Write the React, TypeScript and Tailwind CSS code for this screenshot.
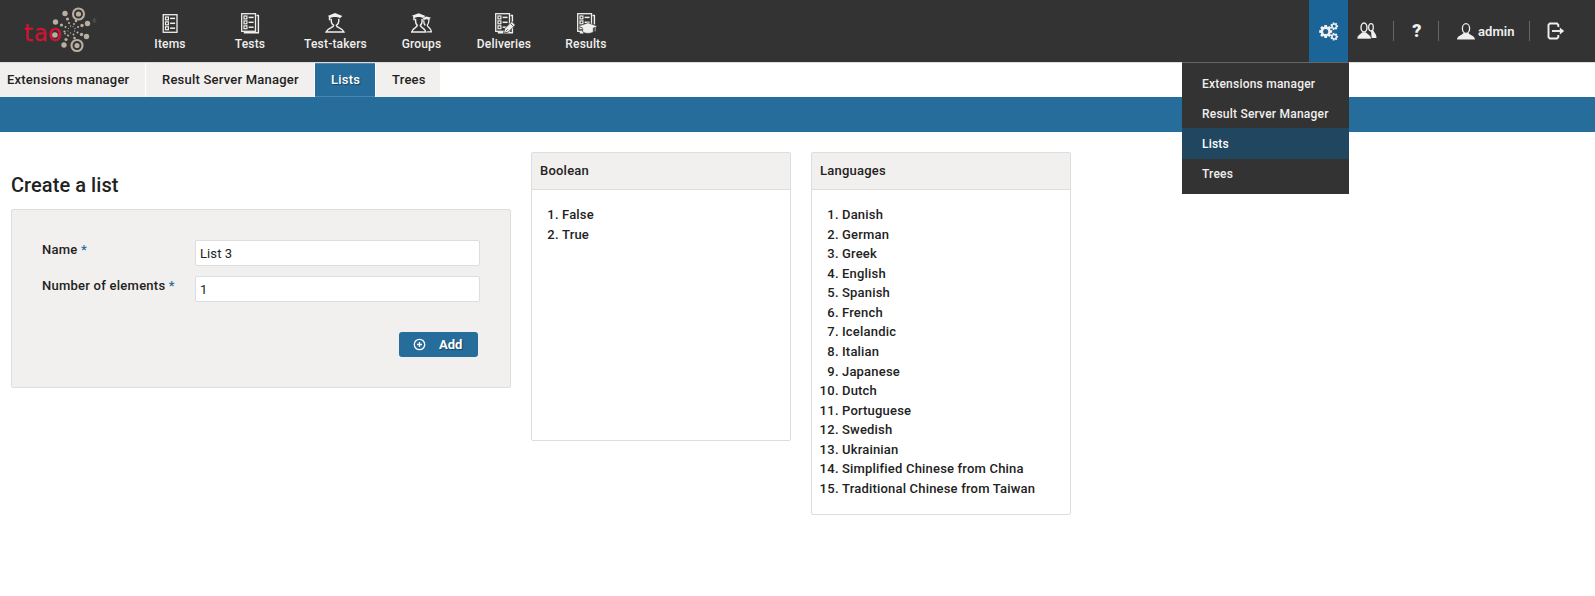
import React from "react";

const ICON = "#f0efee";

function Sheet() {
  return (
    <g fill="none" stroke={ICON} strokeWidth="1.3">
      <rect x="0.7" y="0.7" width="13.8" height="17.6" />
      {[3, 7.9, 12.8].map((y) => (
        <g key={y}>
          <rect x="3" y={y} width="2.9" height="2.9" strokeWidth="1.2" />
          <path d={`M7.600 ${y + 1.4}h5`} strokeWidth="1.500" />
        </g>
      ))}
    </g>
  );
}

function Student() {
  return (
    <g>
      <path d="M10 0 2.600 3l1.200.6v3.600h1.600V5c2-1.400 7.200-1.400 9.200 0v.6L17.400 3z" fill={ICON} />
      <path
        d="M6.300 5.800c-.5 3.600 1 5.600 2.400 6.500 0 2.700-6.200 2.400-7.600 6.600h17.800c-1.400-4.200-7.600-3.900-7.600-6.600 1.400-.9 2.900-2.900 2.400-6.500"
        fill="none"
        stroke={ICON}
        strokeWidth="1.500"
      />
    </g>
  );
}

const navIcons: Record<string, React.ReactNode> = {
  Items: (
    <g transform="translate(2.500 1)">
      <Sheet />
    </g>
  ),
  Tests: (
    <g transform="translate(1 0)">
      <Sheet />
      <path d="M15.500 2.500h1.900v17.200H3.500v-1.500" fill="none" stroke={ICON} strokeWidth="1.400" />
    </g>
  ),
  "Test-takers": <Student />,
  Groups: (
    <g>
      <path
        d="M17.800 6.500c.3 3-.5 4.500-1.500 5.700 0 2 3.700 2.400 4.100 6.700H16M12.700 7.500c0 2.500.5 4 1.600 5"
        fill="none"
        stroke={ICON}
        strokeWidth="1.300"
      />
      <path d="m15.500 3.400-3.500 1.400.5 2.700 1-.8c1.500-.7 3-.7 4.300.2l.7.3.2-1.700 1.500-.7z" fill={ICON} />
      <path d="M7.700.3.800 2.800 2.200 3.600v3.600h1.500V4.900c2-1.200 6-1.200 8 0L14.600 3z" fill={ICON} />
      <path
        d="M4.600 5.800c-.4 3.600.6 5.600 1.700 6.500 0 2.700-5.100 2.400-5.500 6.600h14c-.4-4.200-5.500-3.900-5.500-6.600 1.100-.9 2.200-2.900 1.700-6.500"
        fill="none"
        stroke={ICON}
        strokeWidth="1.500"
      />
    </g>
  ),
  Deliveries: (
    <g transform="translate(1 0)">
      <Sheet />
      <path d="M15.500 2.500h1.900v17.200H3.500v-1.500" fill="none" stroke={ICON} strokeWidth="1.400" />
      <path d="m8.500 20.300 1.300-4.800 7-7 3.600 3.500-7 7z" fill={ICON} stroke="#333" strokeWidth=".8" />
      <path d="m10.800 18.300 2-2M15.500 10.500l3 3" stroke="#333" strokeWidth=".8" />
    </g>
  ),
  Results: (
    <g transform="translate(1 0)">
      <Sheet />
      <path d="M15.500 2.500h1.900v9M3.500 18v1.700h3" fill="none" stroke={ICON} strokeWidth="1.400" />
      <path
        d="m11 9.800 9.500 3.400-1.700.8v4.500h-1.200v-4l-1.300.6V19c-2.300 1.900-8.300 1.900-10.600 0v-3.900L1.500 13.200z"
        fill={ICON}
        stroke="#333"
        strokeWidth=".6"
      />
    </g>
  ),
};

const nav: [string, string][] = [
  ["Items", "w-[80px]"],
  ["Tests", "w-[80px]"],
  ["Test-takers", "w-[91px]"],
  ["Groups", "w-[81px]"],
  ["Deliveries", "w-[84px]"],
  ["Results", "w-[80px]"],
];

function Logo() {
  const c = "#b9aea0";
  const dots: [number, number, number][] = [
    [65, 13.5, 2.7], [55.5, 22, 2.7], [87.5, 23.5, 2.7], [86.5, 36.5, 2.7], [64, 45, 2.7],
    [67.5, 19, 1.6], [61.5, 25, 1.6], [82, 25.5, 1.7], [81.5, 34.5, 1.7], [66, 39.5, 1.6],
    [76, 21, 1.3], [65, 33.5, 0.9], [74.5, 38, 1.3], [69, 23, 1.1], [65.5, 27, 1.1],
    [78, 27, 1.1], [77.5, 32.5, 1.1], [64.5, 31.5, 1.1], [68, 35.5, 1.1], [74, 24, 1], [73.5, 34.5, 1],
    [70.5, 26, 0.7], [68.5, 28.5, 0.6], [75, 28.5, 0.7], [74.5, 31, 0.7], [68, 31, 0.6], [70.5, 33, 0.7], [73, 26.5, 0.6],
  ];
  return (
    <svg width="110" height="62" viewBox="0 0 110 62" className="shrink-0">
      {dots.map(([x, y, r], i) => (
        <circle key={i} cx={x} cy={y} r={r} fill={c} />
      ))}
      <circle cx="78.500" cy="14" r="5.500" fill="none" stroke={c} strokeWidth="2.100" />
      <circle cx="78.500" cy="14" r="2.600" fill={c} />
      <circle cx="77" cy="45.500" r="5.500" fill="none" stroke={c} strokeWidth="2.100" />
      <circle cx="77" cy="45.500" r="2.600" fill={c} />
      <text
        x="24 34 48"
        y="41.300"
        fill="#cf1334"
        fontFamily="DejaVu Sans"
        fontSize="22.500"
        stroke="#cf1334"
        strokeWidth=".3"
      >
        tao
      </text>
      <circle cx="54.900" cy="35" r="2.800" fill={c} />
      <text x="92.500" y="23" fill="#777" fontFamily="Liberation Sans" fontSize="5">
        ®
      </text>
    </svg>
  );
}

function gearPath(cx: number, cy: number, r: number, R: number, hole: number, teeth: number) {
  const pts: string[] = [];
  for (let i = 0; i < teeth; i++) {
    const a = (i / teeth) * 2 * Math.PI;
    const w = Math.PI / teeth;
    [[-0.8, r], [-0.5, R], [0.5, R], [0.8, r]].forEach(([k, q]) =>
      pts.push(`${(cx + q * Math.cos(a + k * w)).toFixed(2)} ${(cy + q * Math.sin(a + k * w)).toFixed(2)}`),
    );
  }
  return `M${pts.join("L")}ZM${cx - hole} ${cy}a${hole} ${hole} 0 1 0 ${2 * hole} 0a${hole} ${hole} 0 1 0 ${-2 * hole} 0Z`;
}

const settings = ["Extensions manager", "Result Server Manager", "Lists", "Trees"];
const languages = [
  "Danish", "German", "Greek", "English", "Spanish", "French", "Icelandic", "Italian", "Japanese", "Dutch",
  "Portuguese", "Swedish", "Ukrainian", "Simplified Chinese from China", "Traditional Chinese from Taiwan",
];

function ListPanel({ title, items, height }: { title: string; items: string[]; height: string }) {
  return (
    <section className={`w-[260px] rounded-[2px] border border-[#ddd] ${height}`}>
      <h2 className="h-[37px] border-b border-[#ddd] bg-[#f2f0ee] pl-2 leading-[36px]">{title}</h2>
      <ol className="pt-[15px] leading-[19.56px] tracking-[.19px]">
        {items.map((item, i) => (
          <li key={item} className="flex">
            <span className="w-[27px] text-right tracking-[.4px]">{i + 1}.</span>
            <span className="pl-[3px]">{item}</span>
          </li>
        ))}
      </ol>
    </section>
  );
}

export default function App() {
  return (
    <div className="h-[596px] overflow-hidden bg-white font-['Roboto',sans-serif] text-[13px] font-medium tracking-[.22px] text-[#222]">
      <header className="flex h-[63px] border-b border-[#ddd] bg-[#333] text-[#f0efee]">
        <Logo />
        <nav className="ml-5 flex text-[12px] tracking-[.18px]">
          {nav.map(([name, width]) => (
            <a key={name} className={`flex flex-col items-center pt-[13px] ${width}`}>
              <svg width="21" height="21" viewBox="0 0 21 21">
                {navIcons[name]}
              </svg>
              <span className="mt-px leading-[18px]">{name}</span>
            </a>
          ))}
        </nav>
        <div className="ml-auto flex items-center">
          <a className="relative flex h-[62px] w-[39px] items-center justify-center bg-[#1b6497]">
            <svg width="20" height="19" viewBox="0 0 21 20" fill={ICON} fillRule="evenodd">
              <path d={gearPath(7, 10, 5.3, 7, 2.7, 8)} />
              <path d={gearPath(16, 4.5, 3, 4.2, 1.5, 7)} />
              <path d={gearPath(16, 15.5, 3, 4.2, 1.5, 7)} />
            </svg>
            <ul className="absolute top-[62px] right-[-1px] z-10 h-[132px] w-[167px] border-t border-[#666] bg-[#333] pt-[5px] text-[12px]">
              {settings.map((name) => (
                <li
                  key={name}
                  className={`pl-5 whitespace-nowrap ${name === "Lists" ? "h-[31px] bg-[#204660] leading-[33px] text-white" : name === "Trees" ? "h-[30px] leading-[31px]" : "h-[30px] leading-[33px]"}`}
                >
                  {name}
                </li>
              ))}
            </ul>
          </a>
          <svg width="20" height="18" viewBox="0 0 20 18" className="ml-[9px]">
            <path d="M14 8.500h2.500c.5 2.500 3 3 3 7.500h-5z" fill={ICON} />
            <ellipse cx="14" cy="5.300" rx="2.300" ry="3.700" fill="#333" stroke={ICON} strokeWidth="1.300" />
            <path d="M0 17c.3-5 4-4.700 5-7h4c1 2.300 4.900 2 5.400 7z" fill={ICON} stroke="#333" strokeWidth=".6" />
            <ellipse cx="7" cy="5.500" rx="3" ry="4.500" fill="#333" stroke={ICON} strokeWidth="1.400" />
          </svg>
          <i className="ml-[16px] h-5 w-px bg-[#666]" />
          <span className="w-[44px] pl-0.5 text-center text-[18px] leading-[64px] font-black">?</span>
          <i className="h-5 w-px bg-[#666]" />
          <svg width="18" height="17" viewBox="0 0 18 17" className="ml-[18px]">
            <path d="M0 16.500c.3-4 5-4 6.500-6.500h5c1.500 2.500 6.200 2.500 6.500 6.500z" fill={ICON} />
            <ellipse cx="9" cy="5.500" rx="3.600" ry="4.800" fill="#333" stroke={ICON} strokeWidth="1.300" />
          </svg>
          <span className="w-[54px] pl-[3px] leading-[67px] font-semibold tracking-[.05px]">admin</span>
          <i className="h-5 w-px bg-[#666]" />
          <svg width="18" height="18" viewBox="0 0 18 18" className="mr-[30px] ml-[17px]" fill="none" stroke={ICON} strokeWidth="1.900">
            <path d="M11.300 5V2.800L10 1.500H2.800L1.500 2.800v12.400l1.300 1.300H10l1.300-1.300V13" />
            <path d="M5 9h9" />
            <path d="m12.800 5.500 4.400 3.500-4.400 3.500z" fill={ICON} stroke="none" />
          </svg>
        </div>
      </header>

      <div className="flex h-[34px] gap-px leading-[33px] tracking-[.22px]">
        <span className="w-[145px] bg-[#f2f0ee] pl-[7px]">Extensions manager</span>
        <span className="w-[168px] bg-[#f2f0ee] pl-4">Result Server Manager</span>
        <span className="w-[60px] border-y border-[#4a87b0] bg-[#266d9c] pl-4 leading-[31px] text-white [text-shadow:1px_1px_1px_#0006]">
          Lists
        </span>
        <span className="w-[64px] bg-[#f2f0ee] pl-4">Trees</span>
      </div>
      <div className="h-[35px] bg-[#266d9c]" />

      <main className="flex gap-5 pt-5 pl-[11px]">
        <div className="w-[500px]">
          <h1 className="pt-[17px] text-[20px] leading-[32px] font-medium tracking-[.06px]">Create a list</h1>
          <form className="mt-2 h-[179px] rounded-[2px] border border-[#ddd] bg-[#f2f0ee] pt-[30px] pr-[30px] pl-[30px]">
            {[["Name", "List 3"], ["Number of elements", "1"]].map(([label, value]) => (
              <div key={label} className="mb-[10px] flex justify-between">
                <label className="leading-[19px] tracking-[.25px]">
                  {label} <span className="text-[#266d9c]">*</span>
                </label>
                <input
                  defaultValue={value}
                  className="h-[26px] w-[285px] rounded-[2px] border border-[#ddd] bg-white px-1 pt-px font-normal tracking-[.1px]"
                />
              </div>
            ))}
            <div className="mt-[30px] flex justify-end pr-0.5">
              <button
                type="button"
                className="flex h-[25px] w-[79px] items-center rounded-[3px] bg-[#266d9c] pl-[14px] font-bold tracking-normal text-white [text-shadow:1px_1px_1px_#0006]"
              >
                <svg width="13" height="13" viewBox="0 0 13 13" fill="none" stroke="#fff" strokeWidth="1.300">
                  <circle cx="6.500" cy="6.500" r="5.200" />
                  <path d="M6.500 4v5M4 6.500h5" />
                </svg>
                <span className="ml-[13px]">Add</span>
              </button>
            </div>
          </form>
        </div>
        <ListPanel title="Boolean" items={["False", "True"]} height="h-[289px]" />
        <ListPanel title="Languages" items={languages} height="h-[363px]" />
      </main>
    </div>
  );
}
